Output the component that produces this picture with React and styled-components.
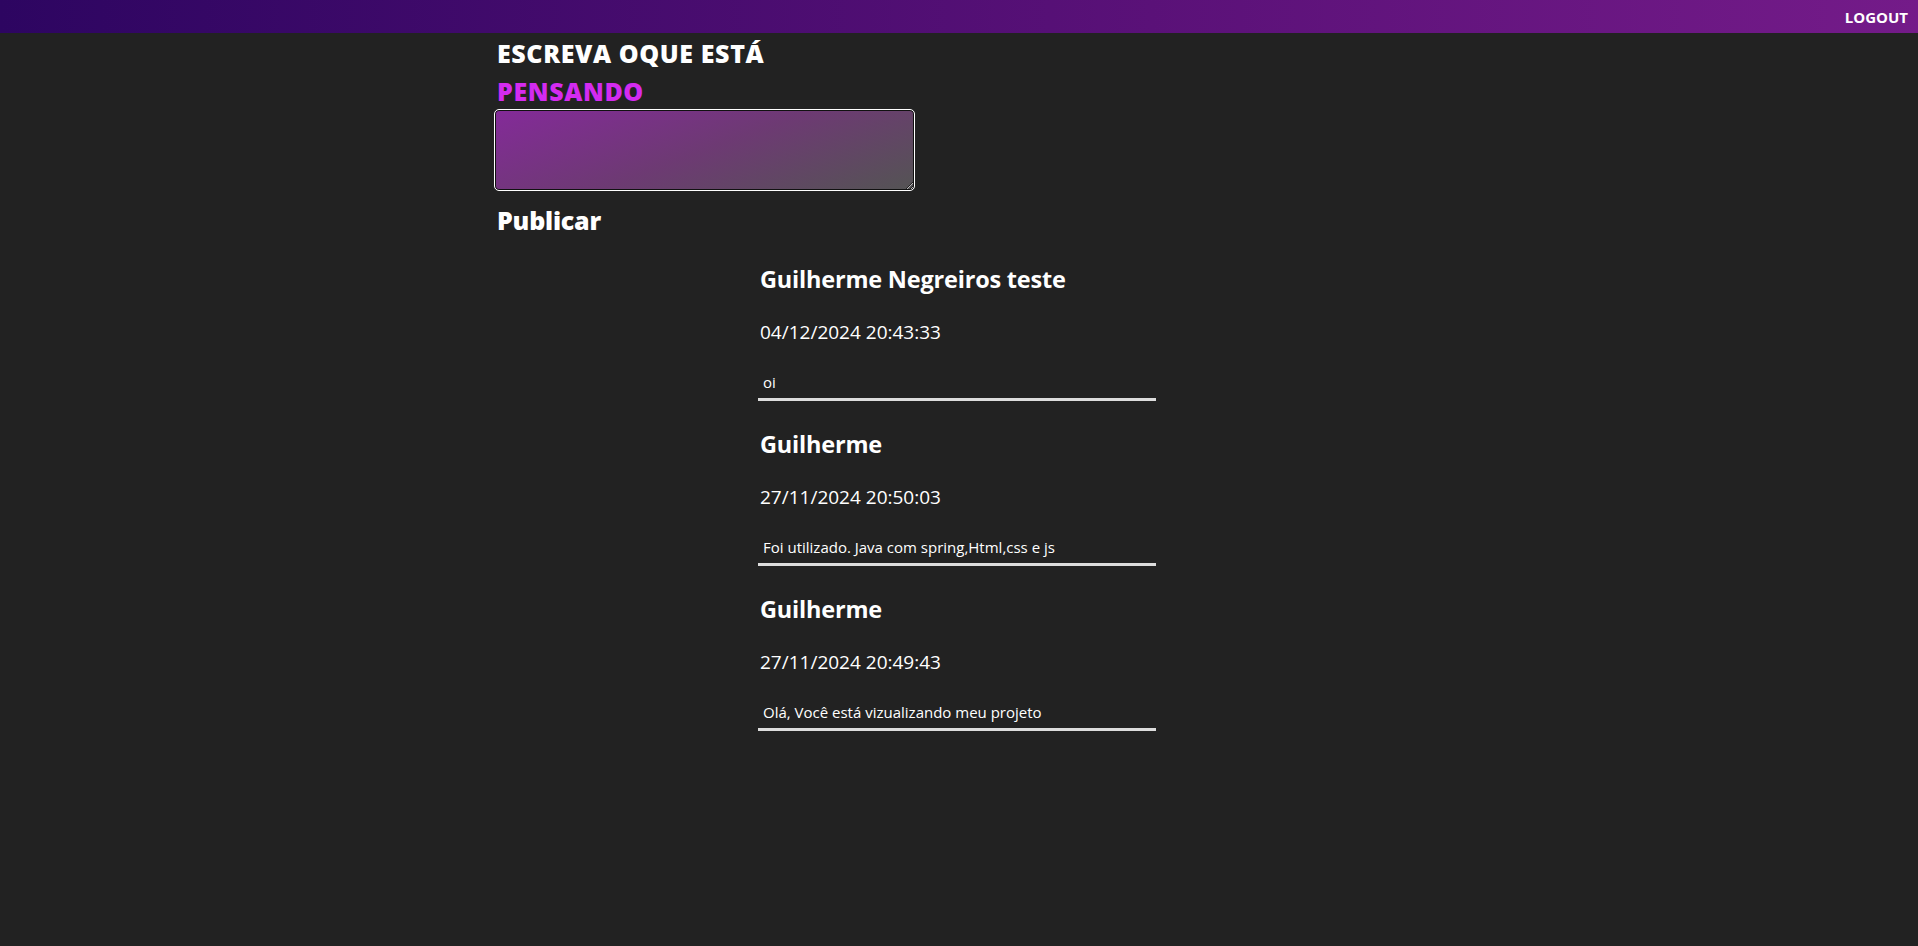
import React from 'react';
import styled, { createGlobalStyle } from 'styled-components';

const GlobalStyle = createGlobalStyle`
  body {
    margin: 0;
    background-color: #222222;
    color: #fff;
    font-family: "Open Sans", "Noto Sans", sans-serif;
  }
`;

const posts = [
  { id: 1, autor: 'Guilherme Negreiros teste', data: '04/12/2024 20:43:33', texto: 'oi' },
  { id: 2, autor: 'Guilherme', data: '27/11/2024 20:50:03', texto: 'Foi utilizado. Java com spring,Html,css e js' },
  { id: 3, autor: 'Guilherme', data: '27/11/2024 20:49:43', texto: 'Olá, Você está vizualizando meu projeto' },
];

export default function App() {
  return (
    <>
      <GlobalStyle />
      <Navbar>
        <LogoutLink href="#">LOGOUT</LogoutLink>
      </Navbar>
      <FormArea>
        <Title>ESCREVA OQUE ESTÁ</Title>
        <Title $accent>PENSANDO</Title>
        <PostInput />
        <PublishButton>Publicar</PublishButton>
      </FormArea>
      <Feed>
        {posts.map((p) => (
          <Post key={p.id}>
            <Author>{p.autor}</Author>
            <PostDate>{p.data}</PostDate>
            <PostText>{p.texto}</PostText>
          </Post>
        ))}
      </Feed>
    </>
  );
}

const Navbar = styled.nav`
  height: 33px;
  display: flex;
  align-items: center;
  justify-content: flex-end;
  padding-right: 10px;
  background: linear-gradient(90deg, #2d0561 0%, #5a1178 60%, #741b89 100%);
`;

const LogoutLink = styled.a`
  color: #fff;
  text-decoration: none;
  font-weight: 700;
  font-size: 15px;
`;

const FormArea = styled.section`
  display: flex;
  flex-direction: column;
  align-items: flex-start;
  padding-left: 494px;
  padding-top: 1px;
`;

const Title = styled.h1`
  margin: 0 0 0 3px;
  font-family: "Open Sans", sans-serif;
  font-weight: 800;
  font-size: 25px;
  line-height: 38px;
  letter-spacing: 0.6px;
  color: ${(p) => (p.$accent ? '#d42bf0' : '#fff')};
`;

const PostInput = styled.textarea`
  width: 421px;
  height: 82px;
  box-sizing: border-box;
  border: 1px solid #fff;
  border-radius: 5px;
  box-shadow: inset 0 0 0 1px #111;
  background: linear-gradient(160deg, #842a99 0%, #6d3a73 50%, #545454 100%);
  color: #fff;
  margin-top: -1px;
`;

const PublishButton = styled.button`
  background: none;
  border: none;
  padding: 0;
  margin: 14px 0 0 3px;
  color: #fff;
  font-family: "Open Sans", sans-serif;
  font-weight: 800;
  font-size: 25px;
  line-height: 30px;
  letter-spacing: -0.2px;
  cursor: pointer;
`;

const Feed = styled.main`
  width: 398px;
  margin: 24px 0 0 calc(50% - 201px);
  display: flex;
  flex-direction: column;
`;

const Post = styled.article`
  display: flex;
  flex-direction: column;
`;

const Author = styled.h2`
  margin: 0 0 0 2px;
  font-size: 23.5px;
  font-weight: 700;
  line-height: 40px;
  letter-spacing: -0.2px;
`;

const PostDate = styled.p`
  margin: 20px 0 0 2px;
  font-size: 19px;
  line-height: 26px;
`;

const PostText = styled.p`
  margin: 26px 0 23px;
  padding: 0 0 5px 5px;
  font-size: 15px;
  line-height: 22px;
  border-bottom: 3px solid #dddddd;
`;
